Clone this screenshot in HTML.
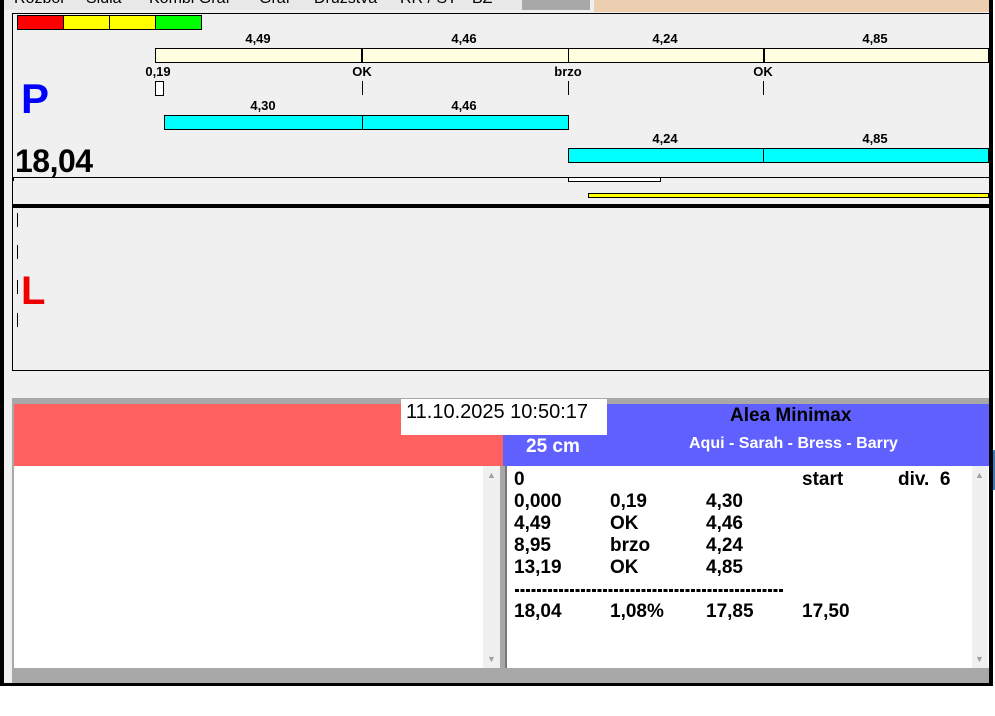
<!DOCTYPE html>
<html><head><meta charset="utf-8"><style>
*{margin:0;padding:0;box-sizing:border-box}
body{width:995px;height:716px;position:relative;background:#fff;font-family:"Liberation Sans",Arial,sans-serif;overflow:hidden}
div{position:absolute}
.t{font-size:13px;font-weight:bold;color:#000;transform:translateX(-50%);white-space:nowrap}
.tk{width:1px;height:14px;background:#000}
.r{font-size:19px;font-weight:bold;color:#000;white-space:nowrap}
</style></head><body>
<!-- frame -->
<div style="left:0;top:0;width:993px;height:686px;background:#000"></div>
<div style="left:4px;top:0;width:985px;height:683px;background:#f0f0f0"></div>
<!-- tabs -->
<div style="left:4px;top:0;width:520px;height:10px;background:#e8e8e8;overflow:hidden;font-size:16px;line-height:6px;color:#000">
<span style="position:absolute;left:10px;top:-4px">Rozbor</span>
<span style="position:absolute;left:82px;top:-4px">Sidla</span>
<span style="position:absolute;left:145px;top:-4px">Kombi Graf</span>
<span style="position:absolute;left:255px;top:-4px">Graf</span>
<span style="position:absolute;left:310px;top:-4px">Druzstva</span>
<span style="position:absolute;left:396px;top:-4px">RR / ST</span>
<span style="position:absolute;left:468px;top:-4px">BZ</span>
</div>
<div style="left:522px;top:0;width:68px;height:10px;background:#a8a8a8"></div>
<div style="left:594px;top:0;width:395px;height:12px;background:#ecceb0"></div>
<!-- top panel -->
<div style="left:12px;top:13px;width:977px;height:1px;background:#000"></div>
<div style="left:12px;top:13px;width:1px;height:357px;background:#000"></div>
<div style="left:17px;top:15px;width:185px;height:15px;border:1px solid #000;background:#f00"></div>
<div style="left:63px;top:15px;width:47px;height:15px;border:1px solid #000;background:#ff0"></div>
<div style="left:109px;top:15px;width:47px;height:15px;border:1px solid #000;background:#ff0"></div>
<div style="left:155px;top:15px;width:47px;height:15px;border:1px solid #000;background:#0f0"></div>

<div class="t" style="left:258px;top:31px">4,49</div>
<div class="t" style="left:464px;top:31px">4,46</div>
<div class="t" style="left:665px;top:31px">4,24</div>
<div class="t" style="left:875px;top:31px">4,85</div>
<div style="left:155px;top:48px;width:834px;height:15px;border:1px solid #000;background:#ffffe0"></div>
<div style="left:361px;top:48px;width:2px;height:15px;background:#000"></div>
<div style="left:568px;top:48px;width:1px;height:15px;background:#000"></div>
<div style="left:763px;top:48px;width:2px;height:15px;background:#000"></div>
<div class="t" style="left:158px;top:64px">0,19</div>
<div class="t" style="left:362px;top:64px">OK</div>
<div class="t" style="left:568px;top:64px">brzo</div>
<div class="t" style="left:763px;top:64px">OK</div>
<div style="left:155px;top:81px;width:9px;height:15px;border:1px solid #000;background:#fff"></div>
<div class="tk" style="left:362px;top:81px"></div>
<div class="tk" style="left:568px;top:81px"></div>
<div class="tk" style="left:763px;top:81px"></div>
<div style="left:21px;top:75px;font-size:42px;font-weight:bold;color:#0000ff">P</div>

<div class="t" style="left:263px;top:98px">4,30</div>
<div class="t" style="left:464px;top:98px">4,46</div>
<div style="left:164px;top:115px;width:405px;height:15px;border:1px solid #000;background:#00ffff"></div>
<div style="left:362px;top:115px;width:1px;height:15px;background:#000"></div>
<div class="t" style="left:665px;top:131px">4,24</div>
<div class="t" style="left:875px;top:131px">4,85</div>
<div style="left:568px;top:148px;width:421px;height:15px;border:1px solid #000;background:#00ffff"></div>
<div style="left:763px;top:148px;width:1px;height:15px;background:#000"></div>
<div style="left:15px;top:143px;font-size:32px;font-weight:bold;letter-spacing:-0.5px">18,04</div>
<div style="left:12px;top:177px;width:977px;height:1px;background:#000"></div>
<div style="left:13px;top:177px;width:1px;height:4px;background:#000"></div>
<div style="left:568px;top:177px;width:93px;height:5px;border:1px solid #000;background:#fff"></div>
<div style="left:588px;top:193px;width:401px;height:5px;border:1px solid #000;background:#ff0"></div>
<div style="left:12px;top:204px;width:977px;height:4px;background:#000"></div>
<!-- L panel -->
<div class="tk" style="left:17px;top:213px"></div>
<div class="tk" style="left:17px;top:245px"></div>
<div class="tk" style="left:17px;top:280px"></div>
<div class="tk" style="left:17px;top:313px"></div>
<div style="left:21px;top:269px;font-size:40px;font-weight:bold;color:#ee0000">L</div>
<div style="left:12px;top:370px;width:977px;height:1px;background:#000"></div>
<!-- bottom -->
<div style="left:12px;top:398px;width:977px;height:285px;background:#a8a8a8"></div>
<div style="left:14px;top:404px;width:489px;height:62px;background:#ff6060"></div>
<div style="left:503px;top:404px;width:486px;height:62px;background:#6060ff"></div>
<div style="left:401px;top:399px;width:206px;height:36px;background:#fff;font-size:20px;line-height:26px;padding-left:5px">11.10.2025 10:50:17</div>
<div style="left:526px;top:436px;font-size:19px;font-weight:bold;color:#fff">25 cm</div>
<div style="left:730px;top:405px;font-size:19px;font-weight:bold;color:#000">Alea Minimax</div>
<div style="left:689px;top:435px;font-size:16px;font-weight:bold;color:#fff">Aqui - Sarah - Bress - Barry</div>

<div style="left:14px;top:466px;width:486px;height:202px;background:#fff"></div>
<div style="left:483px;top:466px;width:17px;height:202px;background:#f0f0f0;color:#a0a0a0;font-size:9px;text-align:center"><span style="position:absolute;left:4px;top:4px">▲</span><span style="position:absolute;left:4px;top:188px">▼</span></div>
<div style="left:500px;top:466px;width:7px;height:202px;background:#a8a8a8"></div>
<div style="left:505px;top:466px;width:2px;height:202px;background:#777"></div>
<div style="left:507px;top:466px;width:482px;height:202px;background:#fff"></div>
<div style="left:972px;top:466px;width:16px;height:202px;background:#f0f0f0;color:#a0a0a0;font-size:9px"><span style="position:absolute;left:3px;top:4px">▲</span><span style="position:absolute;left:3px;top:188px">▼</span></div>

<div class="r" style="left:514px;top:469px">0</div>
<div class="r" style="left:802px;top:469px">start</div>
<div class="r" style="left:898px;top:469px">div.&nbsp; 6</div>
<div class="r" style="left:514px;top:491px">0,000</div><div class="r" style="left:610px;top:491px">0,19</div><div class="r" style="left:706px;top:491px">4,30</div>
<div class="r" style="left:514px;top:513px">4,49</div><div class="r" style="left:610px;top:513px">OK</div><div class="r" style="left:706px;top:513px">4,46</div>
<div class="r" style="left:514px;top:535px">8,95</div><div class="r" style="left:610px;top:535px">brzo</div><div class="r" style="left:706px;top:535px">4,24</div>
<div class="r" style="left:514px;top:557px">13,19</div><div class="r" style="left:610px;top:557px">OK</div><div class="r" style="left:706px;top:557px">4,85</div>
<div style="left:515px;top:589px;width:269px;height:3px;background:repeating-linear-gradient(90deg,#000 0 4px,transparent 4px 5.5px)"></div>
<div class="r" style="left:514px;top:601px">18,04</div><div class="r" style="left:610px;top:601px">1,08%</div><div class="r" style="left:706px;top:601px">17,85</div><div class="r" style="left:802px;top:601px">17,50</div>
<div style="left:993px;top:450px;width:2px;height:40px;background:#3a7ab8"></div>
</body></html>
